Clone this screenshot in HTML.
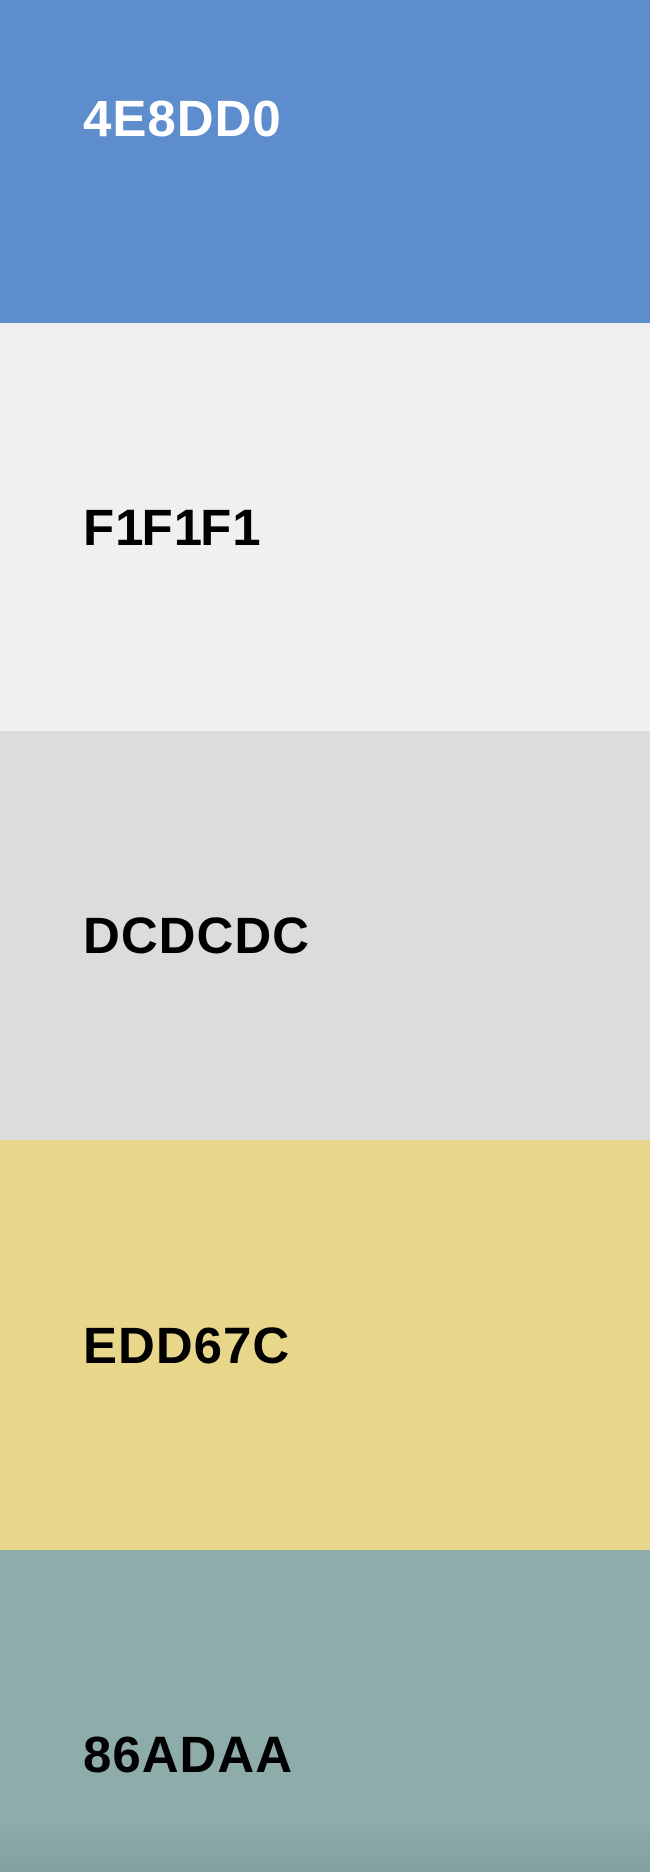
<!DOCTYPE html>
<html><head><meta charset="utf-8"><style>
html,body{margin:0;padding:0;width:650px;height:1872px;overflow:hidden;position:relative}
.b{position:absolute;left:0;width:650px;height:409px;font-family:"Liberation Sans",Arial,sans-serif;font-weight:bold;font-size:51px;letter-spacing:1px;display:flex;align-items:center;box-sizing:border-box;padding-left:83px}
.o{display:inline-block;margin-right:-3px}
</style></head><body>
<div class="b" style="top:-86px;background:#5d8dcc;color:#fff">4E8DD0</div>
<div class="b" style="top:323px;height:408px;background:#f0f0f0;color:#000"><span>F<span class="o">1</span>F<span class="o">1</span>F<span class="o">1</span></span></div>
<div class="b" style="top:731px;background:#dcdcdc;color:#000">DCDCDC</div>
<div class="b" style="top:1140px;height:410px;background:#e8d78a;color:#000">EDD67C</div>
<div class="b" style="top:1550px;background:linear-gradient(#8eacaa 0,#8eacaa 270px,#83a09e 322px,#83a09e 409px);color:#000">86ADAA</div>
</body></html>
